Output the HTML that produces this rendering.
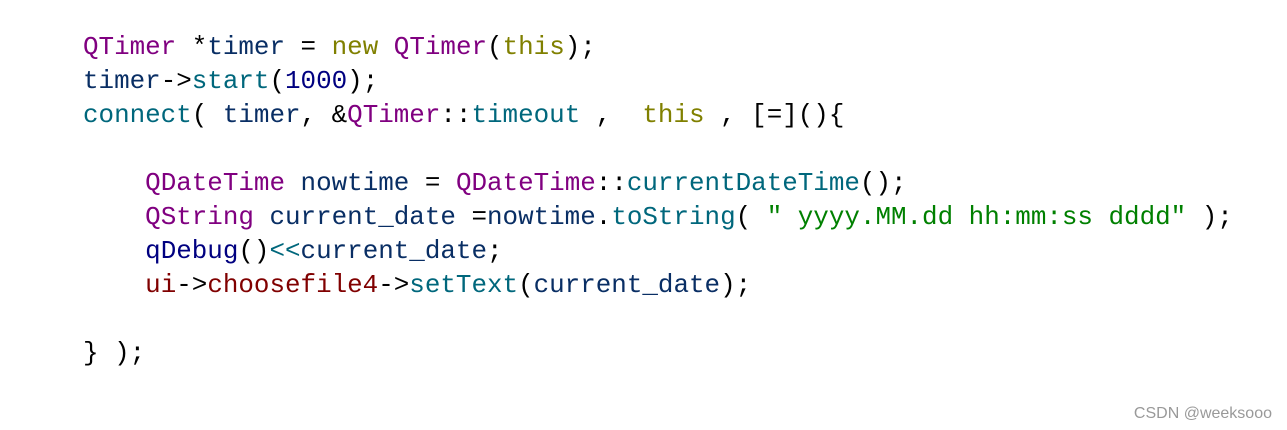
<!DOCTYPE html>
<html><head><meta charset="utf-8"><style>
html,body{margin:0;padding:0;background:#fff;width:1287px;height:430px;overflow:hidden;position:relative}
pre{position:absolute;left:83px;top:30px;margin:0;font-family:"Liberation Mono",monospace;font-size:25.9px;line-height:34px;color:#000}
.p{color:#800080}.o{color:#808000}.n{color:#000080}.t{color:#00677c}.v{color:#092e64}.r{color:#800000}.g{color:#008000}
.wm{position:absolute;right:15px;top:405px;font-family:"Liberation Sans",sans-serif;font-size:16px;color:#999}
</style></head><body>
<pre><span class="p">QTimer</span> *<span class="v">timer</span> = <span class="o">new</span> <span class="p">QTimer</span>(<span class="o">this</span>);
<span class="v">timer</span>-&gt;<span class="t">start</span>(<span class="n">1000</span>);
<span class="t">connect</span>( <span class="v">timer</span>, &amp;<span class="p">QTimer</span>::<span class="t">timeout</span> ,  <span class="o">this</span> , [=](){

    <span class="p">QDateTime</span> <span class="v">nowtime</span> = <span class="p">QDateTime</span>::<span class="t">currentDateTime</span>();
    <span class="p">QString</span> <span class="v">current_date</span> =<span class="v">nowtime</span>.<span class="t">toString</span>( <span class="g">" yyyy.MM.dd hh:mm:ss dddd"</span> );
    <span class="n">qDebug</span>()<span class="t">&lt;&lt;</span><span class="v">current_date</span>;
    <span class="r">ui</span>-&gt;<span class="r">choosefile4</span>-&gt;<span class="t">setText</span>(<span class="v">current_date</span>);

} );</pre>
<div class="wm">CSDN @weeksooo</div>
</body></html>
